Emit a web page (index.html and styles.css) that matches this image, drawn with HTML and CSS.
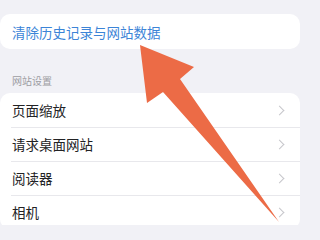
FILE: index.html
```html
<!DOCTYPE html>
<html lang="zh-CN">
<head>
<meta charset="utf-8">
<link rel="stylesheet" href="styles.css">
</head>
<body>
<div class="page">
  <div class="card single">
    <div class="row link">清除历史记录与网站数据</div>
  </div>
  <div class="section-title">网站设置</div>
  <div class="card">
    <div class="row"><span>页面缩放</span><span class="chev"></span></div>
    <div class="row"><span>请求桌面网站</span><span class="chev"></span></div>
    <div class="row"><span>阅读器</span><span class="chev"></span></div>
    <div class="row"><span>相机</span><span class="chev"></span></div>
  </div>
</div>
<svg class="arrow" width="303" height="225" viewBox="0 0 303 225">
  <polygon points="140,45 194,67 180,79 279,222 163,92 147,103" fill="#ec6b46"/>
</svg>
</body>
</html>
```
FILE: styles.css
```css
html, body {
  margin: 0;
  padding: 0;
  background: #f1f1f6;
  width: 303px;
  height: 225px;
  overflow: hidden;
  font-family: "Noto Sans CJK SC", "Noto Sans", sans-serif;
}
.page {
  padding: 14px 3px 0 0;
  display: flex;
  flex-direction: column;
}
.card {
  background: #ffffff;
  border-radius: 10px;
  overflow: hidden;
}
.single .row {
  height: 35px;
  border: none;
}
.row {
  height: 34px;
  box-sizing: border-box;
  display: flex;
  align-items: center;
  justify-content: space-between;
  padding: 0 17px 0 12px;
  font-size: 13.5px;
  color: #222224;
  position: relative;
}
.row + .row::before {
  content: "";
  position: absolute;
  left: 11px;
  right: 0;
  top: 0;
  height: 1px;
  background: #e8e8ec;
}
.link {
  color: #3c84d7;
}
.section-title {
  font-size: 10px;
  color: #9d9da3;
  padding: 26px 0 6px 12px;
  line-height: 12px;
}
.chev {
  width: 6px;
  height: 6px;
  border-right: 1.5px solid #c6c6cb;
  border-top: 1.5px solid #c6c6cb;
  transform: rotate(45deg);
}
.arrow {
  position: absolute;
  left: 0;
  top: 0;
}
```
